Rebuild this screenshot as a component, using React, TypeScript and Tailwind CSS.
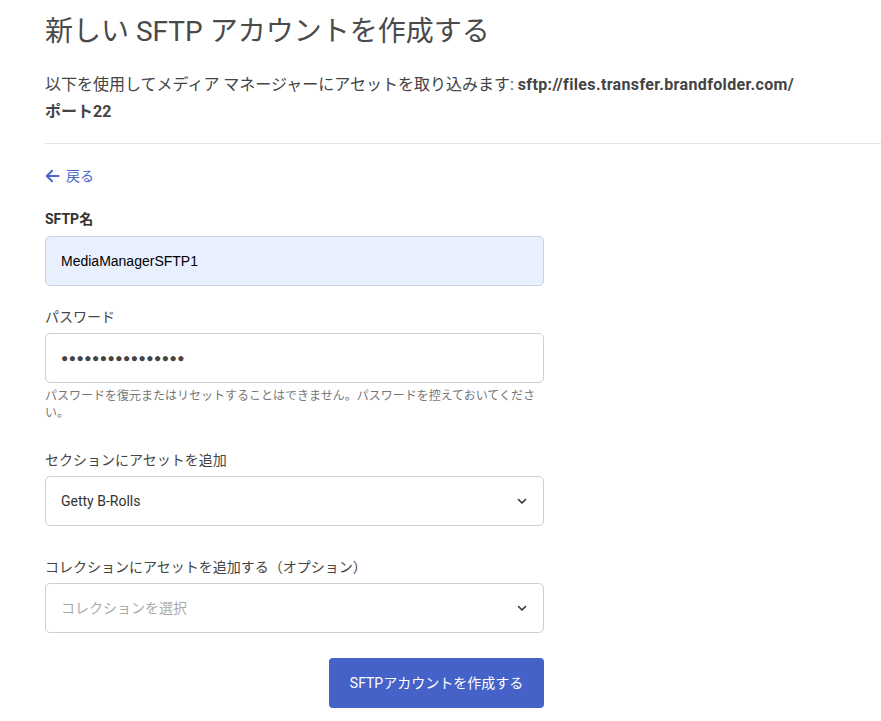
import React from "react";

const font = { fontFamily: 'Roboto, "Noto Sans CJK JP", sans-serif' };

function Chevron() {
  return (
    <svg width="12" height="12" viewBox="0 0 12 12" fill="none" stroke="#333" strokeWidth="1.6" strokeLinecap="round" strokeLinejoin="round">
      <path d="M2.5 4.5 L6 8 L9.5 4.5" />
    </svg>
  );
}

export default function App() {
  return (
    <div className="min-h-[721px] bg-white text-[#444]" style={font}>
      <div className="pl-[45px] pt-[12px]">
        <h1 className="text-[28px] leading-[40px] text-[#4a4a4a] font-normal">新しい SFTP アカウントを作成する</h1>
        <p className="mt-[19px] text-[16px] leading-[27px] text-[#444]">
          以下を使用してメディア マネージャーにアセットを取り込みます: <span className="font-bold tracking-[0.35px]">sftp://files.transfer.brandfolder.com/</span>
          <br />
          <span className="font-bold">ポート22</span>
        </p>
      </div>
      <div className="ml-[45px] mt-[18px] border-t border-[#e3e3e3]" />
      <div className="pl-[45px] w-[544px]">
        <a className="mt-[22px] flex items-center gap-[6px] text-[14px] text-[#4a66c9] leading-[20px]">
          <svg width="15" height="14" viewBox="0 0 15 14" fill="none" stroke="#4a66c9" strokeWidth="2" strokeLinecap="round" strokeLinejoin="round">
            <path d="M13.5 7 H2" />
            <path d="M7 1.8 L1.8 7 L7 12.2" />
          </svg>
          戻る
        </a>
        <div className="mt-[23px]">
          <label className="block text-[14px] font-bold leading-[20px] text-[#333]">SFTP名</label>
          <div className="mt-[7px] h-[50px] rounded-[5px] border border-[#cfd4dc] bg-[#e8f0fe] flex items-center px-[15px] text-[14px] text-black" style={{ fontFamily: '"Liberation Sans", Arial, sans-serif' }}>
            MediaManagerSFTP1
          </div>
        </div>
        <div className="mt-[21px]">
          <label className="block text-[14px] leading-[20px] text-[#444]">パスワード</label>
          <div className="mt-[6px] h-[50px] rounded-[5px] border border-[#cfcfcf] bg-white flex items-center px-[15px] text-[12px] tracking-[0.5px] text-[#444]" style={{ fontFamily: '"Liberation Sans", Arial, sans-serif' }}>
            ●●●●●●●●●●●●●●●●
          </div>
          <p className="mt-[5px] text-[12px] leading-[17px] text-[#777]">
            パスワードを復元またはリセットすることはできません。パスワードを控えておいてください。
          </p>
        </div>
        <div className="mt-[28px]">
          <label className="block text-[14px] leading-[20px] text-[#444]">セクションにアセットを追加</label>
          <div className="mt-[6px] h-[50px] rounded-[5px] border border-[#cfcfcf] bg-white flex items-center justify-between pl-[15px] pr-[15px] text-[14px] text-[#333]">
            <span>Getty B-Rolls</span>
            <Chevron />
          </div>
        </div>
        <div className="mt-[31px]">
          <label className="block text-[14px] leading-[20px] text-[#444]">コレクションにアセットを追加する（オプション）</label>
          <div className="mt-[6px] h-[50px] rounded-[5px] border border-[#cfcfcf] bg-white flex items-center justify-between pl-[15px] pr-[15px] text-[14px] text-[#aaa]">
            <span>コレクションを選択</span>
            <Chevron />
          </div>
        </div>
        <div className="mt-[25px] flex justify-end">
          <button className="h-[50px] w-[215px] rounded-[4px] bg-[#4562c8] text-white text-[14px]">
            SFTPアカウントを作成する
          </button>
        </div>
      </div>
    </div>
  );
}
